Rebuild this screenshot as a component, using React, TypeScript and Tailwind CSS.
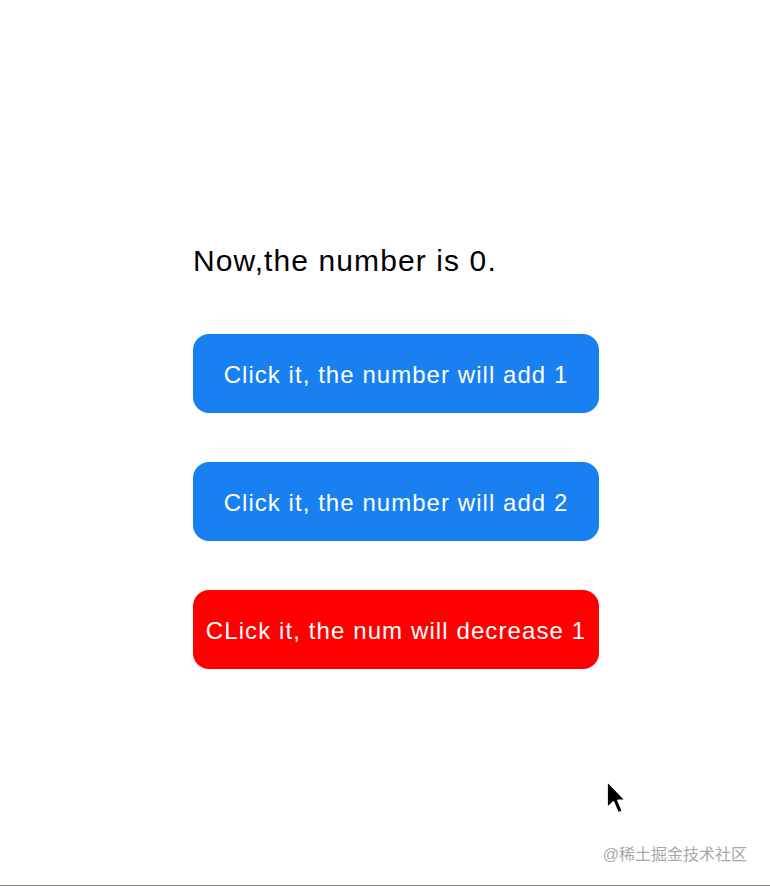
import { useState } from 'react';

export default function App() {
  const [num, setNum] = useState(0);

  return (
    <div
      className="relative h-[886px] w-full bg-white flex flex-col border-b border-[#8c8c84]"
      style={{ fontFamily: '"Liberation Sans", Arial, "Noto Sans CJK SC", sans-serif' }}
    >
      <div className="flex-1 pl-[193px] pt-[243px]">
        <div className="w-[406px] flex flex-col">
          <p className="text-[30px] leading-[36px] tracking-[1.1px] text-black">Now,the number is {num}.</p>

          <div className="mt-[55px] flex flex-col gap-[49px]">
            <button
              onClick={() => setNum(num + 1)}
              className="h-[79px] w-full rounded-[16px] bg-[#1880f0] pt-[3px] text-white text-[24px] tracking-[1.05px]"
            >
              Click it, the number will add 1
            </button>
            <button
              onClick={() => setNum(num + 2)}
              className="h-[79px] w-full rounded-[16px] bg-[#1880f0] pt-[3px] text-white text-[24px] tracking-[1.05px]"
            >
              Click it, the number will add 2
            </button>
            <button
              onClick={() => setNum(num - 1)}
              className="h-[79px] w-full rounded-[16px] bg-[#ff0000] pt-[3px] text-white text-[24px] tracking-[1.1px]"
            >
              CLick it, the num will decrease 1
            </button>
          </div>
        </div>
      </div>

      {/* watermark */}
      <div className="flex justify-end pr-[23px] pb-[20px]">
        <span
          className="text-[16px] leading-[20px] text-[#a8a8a8]"
          style={{ fontFamily: '"Liberation Sans", "Noto Sans CJK SC", sans-serif' }}
        >
          @稀土掘金技术社区
        </span>
      </div>

      {/* mouse pointer */}
      <svg
        className="absolute left-[604px] top-[779px]"
        width="28"
        height="40"
        viewBox="0 0 28 40"
      >
        <path
          d="M3 2 L3 29 L9.5 23 L14 34 L18.5 32 L14 21.5 L22 21.5 Z"
          fill="#000"
          stroke="#fff"
          strokeWidth="1.8"
          strokeLinejoin="round"
        />
      </svg>
    </div>
  );
}
